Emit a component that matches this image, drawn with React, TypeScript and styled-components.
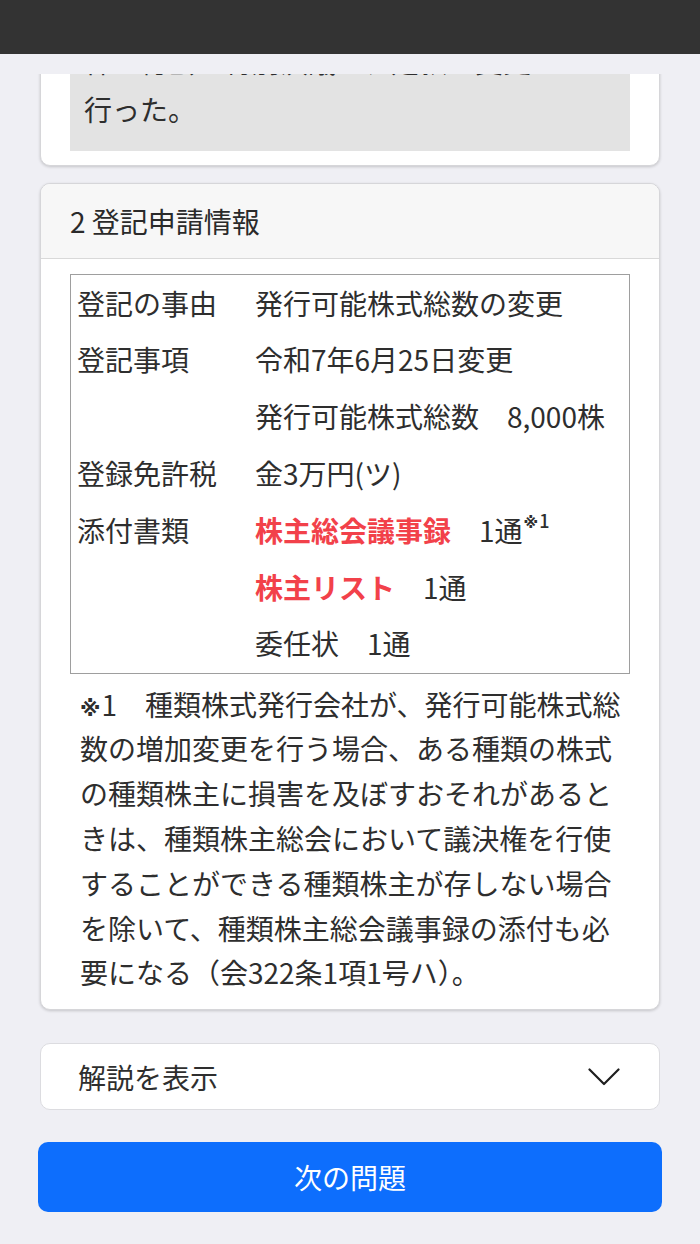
import React from "react";
import styled, { createGlobalStyle } from "styled-components";

const GlobalStyle = createGlobalStyle`
  * {
    box-sizing: border-box;
  }
  body {
    margin: 0;
    background: #efeff4;
    color: #2e2e2e;
    font-family: "Noto Sans CJK JP", "Noto Sans", sans-serif;
    -webkit-font-smoothing: antialiased;
  }
`;

type Row = { label: string; value: React.ReactNode };

const App = () => {
  const rows: Row[] = [
    { label: "登記の事由", value: "発行可能株式総数の変更" },
    { label: "登記事項", value: "令和7年6月25日変更" },
    { label: "", value: "発行可能株式総数　8,000株" },
    { label: "登録免許税", value: "金3万円(ツ)" },
    {
      label: "添付書類",
      value: (
        <>
          <Red>株主総会議事録</Red>　1通<Sup><Mark $small>※</Mark>1</Sup>
        </>
      ),
    },
    {
      label: "",
      value: (
        <>
          <Red>株主リスト</Red>　1通
        </>
      ),
    },
    { label: "", value: "委任状　1通" },
  ];

  return (
    <>
      <GlobalStyle />
      <TopBar />
      <Viewport>
        <Card $clipped>
          <NoteBox>
            株主総会の特別決議で、定款の変更を
            <br />
            行った。
          </NoteBox>
        </Card>

        <Card>
          <CardHeader>2 登記申請情報</CardHeader>
          <CardBody>
            <Table>
              {rows.map((r, i) => (
                <React.Fragment key={i}>
                  <Label>{r.label}</Label>
                  <Value>{r.value}</Value>
                </React.Fragment>
              ))}
            </Table>
            <Footnote>
              <Mark>※</Mark>1　種類株式発行会社が、発行可能株式総数の増加変更を行う場合、ある種類の株式の種類株主に損害を及ぼすおそれがあるときは、種類株主総会において議決権を行使することができる種類株主が存しない場合を除いて、種類株主総会議事録の添付も必要になる（会322条1項1号ハ）。
            </Footnote>
          </CardBody>
        </Card>

        <Toggle type="button">
          <span>解説を表示</span>
          <svg width="32" height="18" viewBox="0 0 32 18" fill="none">
            <polyline
              points="1.5,1.5 16,16 30.5,1.5"
              stroke="#1f1f1f"
              strokeWidth="2.2"
              strokeLinecap="round"
              strokeLinejoin="round"
            />
          </svg>
        </Toggle>

        <NextButton type="button">次の問題</NextButton>
      </Viewport>
    </>
  );
};

export default App;

const TopBar = styled.header`
  height: 54px;
  background: #333333;
`;

const Viewport = styled.main`
  margin-top: 20px;
  overflow: hidden;
  padding: 0 38px 32px;
`;

const Card = styled.section<{ $clipped?: boolean }>`
  margin: ${(p) => (p.$clipped ? "-72px 2px 0" : "17px 2px 0")};
  background: #ffffff;
  border: 1px solid #d6d6d9;
  border-radius: 10px;
  box-shadow: 0 1px 3px rgba(0, 0, 0, 0.18);
  overflow: hidden;
  padding: ${(p) => (p.$clipped ? "20px 29px 14px" : "0")};
`;

const NoteBox = styled.div`
  background: #e3e3e3;
  padding: 14px 14px 18px;
  font-size: 28px;
  line-height: 48px;
  color: #2e2e2e;
`;

const CardHeader = styled.h2`
  margin: 0;
  height: 75px;
  display: flex;
  align-items: center;
  padding: 0 29px;
  background: #f7f7f7;
  border-bottom: 1px solid #d9d9d9;
  font-size: 28px;
  font-weight: 400;
  color: #2a2a2a;
`;

const CardBody = styled.div`
  padding: 15px 29px 14px;
`;

const Table = styled.div`
  display: grid;
  grid-template-columns: 178px 1fr;
  grid-auto-rows: 56.8px;
  align-items: center;
  padding: 0 6px;
  border: 1px solid #9e9e9e;
  font-size: 28px;
  line-height: 1.2;
`;

const Label = styled.div`
  color: #2e2e2e;
  white-space: nowrap;
`;

const Value = styled.div`
  color: #2e2e2e;
  white-space: nowrap;
`;

const Red = styled.span`
  color: #f2414a;
  font-weight: 700;
`;

const Sup = styled.sup`
  font-size: 18px;
  font-weight: 500;
  line-height: 0;
  position: relative;
  top: -3px;
  margin-left: 1px;
`;

const Footnote = styled.p`
  margin: 8px 0 0;
  padding-left: 10px;
  font-size: 28px;
  line-height: 44.8px;
  color: #2e2e2e;
`;

const Mark = styled.span<{ $small?: boolean }>`
  font-family: "DejaVu Sans", "Noto Sans CJK JP", sans-serif;
  font-size: ${(p) => (p.$small ? "15px" : "21px")};
  font-weight: 700;
  line-height: 0;
  margin-right: 1px;
`;

const Toggle = styled.button`
  display: flex;
  align-items: center;
  justify-content: space-between;
  width: calc(100% - 4px);
  height: 67px;
  margin: 33px 2px 0;
  padding: 0 39px 0 37px;
  background: #ffffff;
  border: 1px solid #dcdce0;
  border-radius: 10px;
  font-family: inherit;
  font-size: 28px;
  color: #2e2e2e;
  cursor: pointer;
`;

const NextButton = styled.button`
  display: block;
  width: 100%;
  height: 70px;
  margin-top: 32px;
  background: #0d6efd;
  border: none;
  border-radius: 10px;
  font-family: inherit;
  font-size: 28px;
  font-weight: 400;
  color: #ffffff;
  cursor: pointer;
`;
